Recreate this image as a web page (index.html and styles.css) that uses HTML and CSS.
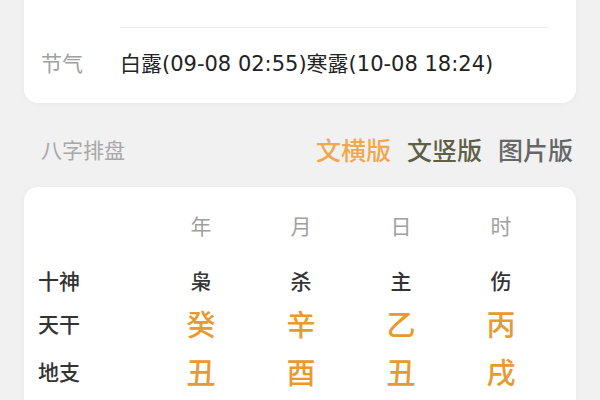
FILE: index.html
```html
<!DOCTYPE html>
<html lang="zh">
<head>
<meta charset="utf-8">
<title>八字排盘</title>
<link rel="stylesheet" href="styles.css">
</head>
<body>
<div class="page">
  <section class="card info">
    <div class="row prev">
      <div class="label">农历</div>
      <div class="value">癸丑年 八月十九 戌时</div>
    </div>
    <div class="row main">
      <div class="label">节气</div>
      <div class="value sep">白露(09-08 02:55)寒露(10-08 18:24)</div>
    </div>
  </section>

  <div class="section-head">
    <div class="title">八字排盘</div>
    <div class="tabs">
      <span class="tab active">文横版</span>
      <span class="tab olive">文竖版</span>
      <span class="tab">图片版</span>
    </div>
  </div>

  <section class="card chart">
    <div class="grid head">
      <div></div>
      <div class="col">年</div>
      <div class="col">月</div>
      <div class="col">日</div>
      <div class="col">时</div>
    </div>
    <div class="grid r-god">
      <div class="rlabel">十神</div>
      <div class="col">枭</div>
      <div class="col">杀</div>
      <div class="col">主</div>
      <div class="col">伤</div>
    </div>
    <div class="grid r-stem">
      <div class="rlabel">天干</div>
      <div class="col big">癸</div>
      <div class="col big">辛</div>
      <div class="col big">乙</div>
      <div class="col big">丙</div>
    </div>
    <div class="grid r-branch">
      <div class="rlabel">地支</div>
      <div class="col big">丑</div>
      <div class="col big">酉</div>
      <div class="col big">丑</div>
      <div class="col big">戌</div>
    </div>
  </section>
</div>
</body>
</html>
```

FILE: styles.css
```css
* { box-sizing: border-box; }
html, body { margin: 0; padding: 0; }
body {
  background: #f1f1f1;
  font-family: "Noto Sans CJK SC", "Noto Sans", sans-serif;
  color: #333;
  width: 600px;
  height: 400px;
  overflow: hidden;
}
.page { display: flex; flex-direction: column; }

.card {
  background: #fff;
  margin: 0 24px;
  border-radius: 14px;
  box-shadow: 0 1px 6px rgba(0,0,0,0.04);
}
.info {
  margin-top: -49px;
  border-radius: 0 0 14px 14px;
  padding: 0 28px 0 17px;
}
.row {
  display: flex;
  align-items: stretch;
  height: 76px;
}
.row .label {
  width: 79px;
  display: flex;
  align-items: center;
  font-size: 21px;
  color: #a0a0a0;
}
.row .value {
  flex: 1;
  display: flex;
  align-items: center;
  font-family: "DejaVu Sans", "Noto Sans CJK SC", sans-serif;
  font-size: 21px;
  color: #222;
  white-space: nowrap;
}
.row.prev .label, .row.prev .value { color: #c4c4c4; padding-bottom: 16px; }
.row.main .label, .row.main .value { padding-bottom: 7px; }
.row .value.sep { border-top: 1px solid #ececec; }

.section-head {
  height: 84px;
  padding: 8px 27px 0 41px;
  display: flex;
  align-items: center;
  justify-content: space-between;
}
.title { font-size: 21px; color: #a8a8a8; }
.tabs { display: flex; gap: 16px; }
.tab { font-size: 25px; color: #666; font-weight: 500; }
.tab.active { color: #f0a850; }
.tab.olive { color: #5e5f47; }

.chart { padding: 23px 0 0 14px; height: 230px; }
.grid {
  display: grid;
  grid-template-columns: 113px repeat(4, 100px);
  align-items: center;
}
.head { height: 28px; font-size: 21px; color: #a0a0a0; }
.r-god { margin-top: 21px; height: 42px; }
.r-stem { height: 44px; }
.r-branch { height: 52px; }
.col { text-align: center; font-size: 21px; font-weight: 500; }
.head .col { color: #a0a0a0; font-weight: 400; }
.rlabel { font-size: 21px; color: #333; font-weight: 500; }
.col.big { font-size: 29px; color: #e89a30; }
```
